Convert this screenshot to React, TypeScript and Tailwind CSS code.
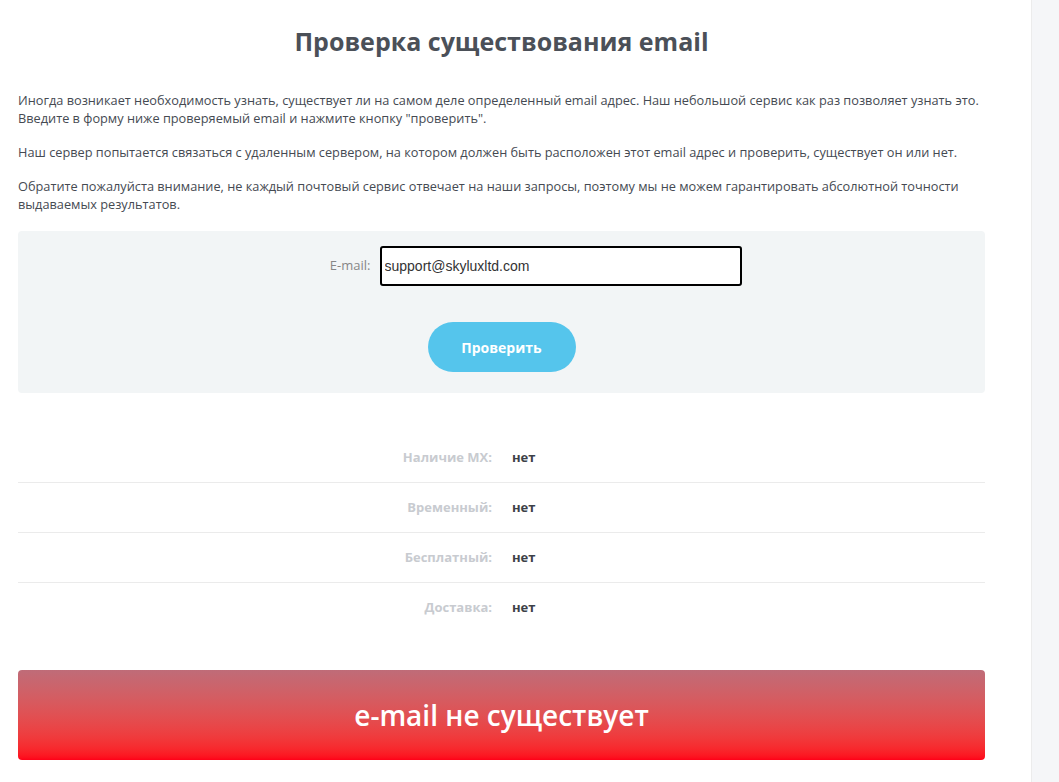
import React from 'react';

const rows = [
  { label: 'Наличие MX:', value: 'нет' },
  { label: 'Временный:', value: 'нет' },
  { label: 'Бесплатный:', value: 'нет' },
  { label: 'Доставка:', value: 'нет' },
];

export default function App() {
  return (
    <div className="flex min-h-[782px] w-full bg-white" style={{ fontFamily: '"Open Sans", sans-serif' }}>
      <main className="flex-1 pt-[26px] pr-[46px] pb-6 pl-[18px]">
        <h1 className="text-center text-[25px] font-bold leading-[30px] text-[#4b5058]">
          Проверка существования email
        </h1>

        {/* Intro text */}
        <div className="mt-[35px] space-y-[16px] text-[12.75px] leading-[18px] text-[#454a52]">
          <p>
            Иногда возникает необходимость узнать, существует ли на самом деле определенный email адрес. Наш небольшой сервис как раз позволяет узнать это.
            <br />
            Введите в форму ниже проверяемый email и нажмите кнопку "проверить".
          </p>
          <p>Наш сервер попытается связаться с удаленным сервером, на котором должен быть расположен этот email адрес и проверить, существует он или нет.</p>
          <p>
            Обратите пожалуйста внимание, не каждый почтовый сервис отвечает на наши запросы, поэтому мы не можем гарантировать абсолютной точности выдаваемых результатов.
          </p>
        </div>

        {/* Form */}
        <div className="mt-[18px] flex h-[162px] flex-col items-center rounded bg-[#f2f5f6] pt-[15px]">
          <div className="flex items-center">
            <label className="mr-[9px] w-[109px] text-right text-[13px] font-medium text-[#878787]">E-mail:</label>
            <input
              defaultValue="support@skyluxltd.com"
              className="h-[40px] w-[362px] rounded-[3px] border-2 border-black bg-white px-[3px] text-[14px] text-[#333] outline-none"
              style={{ fontFamily: '"Liberation Sans", Arial, sans-serif' }}
            />
          </div>
          <button className="mt-[36px] h-[50px] w-[148px] rounded-full bg-[#55c5ec] text-[14px] font-bold text-white">
            Проверить
          </button>
        </div>

        {/* Results */}
        <div className="mt-[40px]">
          {rows.map((r, i) => (
            <div
              key={r.label}
              className={`flex h-[50px] items-center ${i < rows.length - 1 ? 'border-b border-[#ebebeb]' : ''}`}
            >
              <span className="w-[474px] text-right text-[13px] font-bold text-[#c8cbd0]">{r.label}</span>
              <span className="ml-[20px] text-[13px] font-bold text-[#3d4148]">{r.value}</span>
            </div>
          ))}
        </div>

        <div className="mt-[37px] flex h-[90px] items-center justify-center rounded bg-gradient-to-b from-[#bf6c78] to-[#ff0018]">
          <span className="text-[28px] font-semibold text-white">e-mail не существует</span>
        </div>
      </main>
      <aside className="w-[28px] shrink-0 border-l border-[#ececec] bg-[#f5f6f8]" />
    </div>
  );
}
